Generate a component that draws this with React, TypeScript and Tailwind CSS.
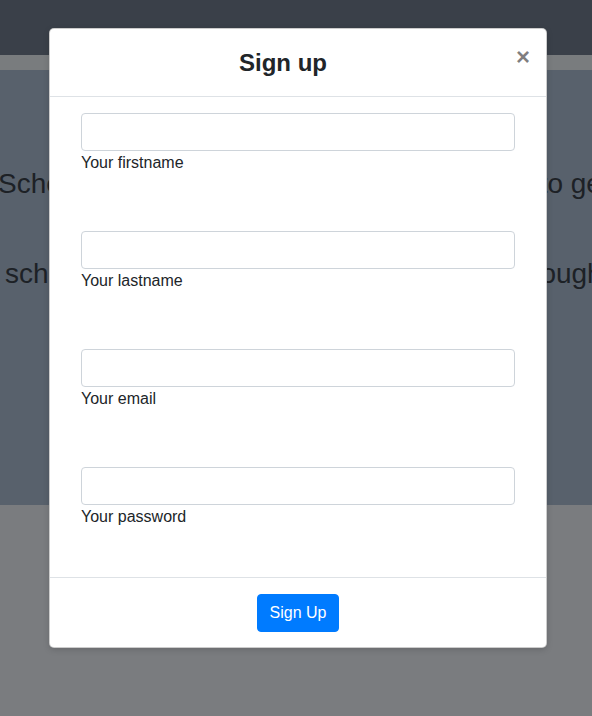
import React from "react";

function Field({ label }: { label: string }) {
  return (
    <div className="flex flex-col">
      <input
        type="text"
        className="h-[38px] w-full rounded-[4px] border border-[#ced4da] bg-white px-3 text-base text-[#495057] outline-none"
      />
      <label className="text-base leading-6 text-[#212529]">{label}</label>
    </div>
  );
}

export default function App() {
  return (
    <div className="relative h-[716px] w-[592px] overflow-hidden font-['Liberation_Sans',Arial,sans-serif]">
      {/* page behind the backdrop */}
      <div className="h-[55px] bg-[#3a4049]" />
      <div className="h-[15px] bg-[#797c7e]" />
      <div className="flex h-[435px] flex-col overflow-hidden bg-[#58616c] pt-[93px] text-[28px] leading-[42px] text-[#1d2126] whitespace-nowrap">
        <p className="-ml-[2px]">Schedule your classes and manage events to get organized.</p>
        <p className="ml-[5px] mt-[48px]">schedule your lessons and your classes through our app.</p>
      </div>
      <div className="h-[211px] bg-[#7a7c7f]" />

      {/* modal */}
      <div className="absolute left-[49px] top-[28px] flex w-[498px] flex-col rounded-[5px] border border-black/20 bg-white shadow-[0_2px_6px_rgba(0,0,0,0.15)]">
        <div className="flex items-start border-b border-[#dee2e6] px-4 pt-4 pb-[15px]">
          <h4 className="flex-1 text-center text-2xl font-bold leading-9 text-[#212529]">Sign up</h4>
          <button className="-my-4 -mr-4 ml-auto p-4 text-[24px] font-bold leading-none text-black/50">×</button>
        </div>
        <form className="flex flex-col gap-[56px] px-[31px] pt-4 pb-[48px]">
          <Field label="Your firstname" />
          <Field label="Your lastname" />
          <Field label="Your email" />
          <Field label="Your password" />
        </form>
        <div className="flex justify-center border-t border-[#dee2e6] pt-4 pb-[15px]">
          <button className="h-[38px] rounded-[4px] border border-[#007bff] bg-[#007bff] px-3 text-base text-white">
            Sign Up
          </button>
        </div>
      </div>
    </div>
  );
}
